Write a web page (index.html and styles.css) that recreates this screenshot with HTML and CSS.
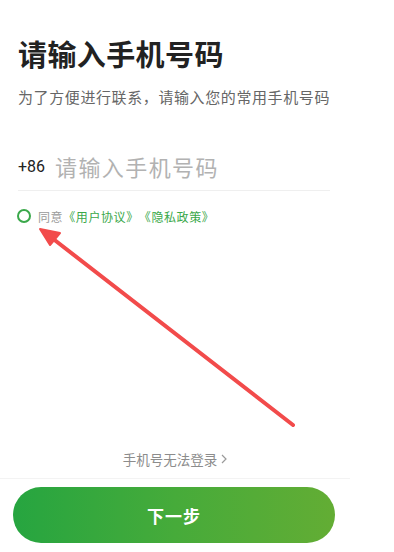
FILE: index.html
```html
<!DOCTYPE html>
<html lang="zh-CN">
<head>
  <meta charset="UTF-8" />
  <meta name="viewport" content="width=device-width, initial-scale=1.0"/>
  <title>手机号登录</title>
  <link rel="stylesheet" href="styles.css">
</head>
<body>
  <div class="page">
    <div class="top">
      <h1 class="title">请输入手机号码</h1>
      <p class="subtitle">为了方便进行联系，请输入您的常用手机号码</p>

      <div class="phone-row">
        <span class="prefix">+86</span>
        <input class="phone-input" type="tel" placeholder="请输入手机号码">
      </div>

      <div class="agree">
        <span class="radio"></span>
        <span class="agree-text">同意</span>
        <a class="agree-link" href="#">《用户协议》</a><a class="agree-link" href="#">《隐私政策》</a>
      </div>
    </div>

    <div class="bottom">
      <a class="help-link" href="#">手机号无法登录
        <svg class="chevron" width="6" height="10" viewBox="0 0 6 10"><polyline points="1,1 5,5 1,9" fill="none" stroke="#9a9a9a" stroke-width="1.2"/></svg>
      </a>
      <div class="divider"></div>
      <button class="next-btn">下一步</button>
    </div>

    <!-- annotation arrow -->
    <svg class="arrow" width="350" height="552" viewBox="0 0 350 552">
      <line x1="293" y1="425" x2="52" y2="238" stroke="#f24b4b" stroke-width="4" stroke-linecap="round"/>
      <polygon points="40,229 60,233 50,245" fill="#f24b4b" stroke="#f24b4b" stroke-width="2" stroke-linejoin="round"/>
    </svg>
  </div>
</body>
</html>
```

FILE: styles.css
```css
* { box-sizing: border-box; margin: 0; padding: 0; }
body {
  font-family: "Noto Sans CJK SC", "Noto Sans", sans-serif;
  background: #fff;
  color: #222;
}
.page {
  position: relative;
  width: 350px;
  height: 552px;
  display: flex;
  flex-direction: column;
}
.top { padding: 36px 18px 0 18px; }
.title {
  font-size: 29px; line-height: 35px; font-weight: 700;
  letter-spacing: 0.4px;
  color: #222;
}
.subtitle {
  margin-top: 16px;
  font-size: 15px; line-height: 20px; letter-spacing: 0.6px;
  color: #666;
  white-space: nowrap;
}
.phone-row {
  margin-top: 35px;
  width: 312px;
  height: 49px;
  display: flex; align-items: center;
  border-bottom: 1px solid #efefef;
}
.prefix {
  font-family: "Roboto", "Noto Sans", sans-serif;
  font-size: 16px; color: #222;
  margin-right: 10px;
}
.phone-input {
  flex: 1; border: none; outline: none; background: none;
  font-family: inherit; font-size: 22px; letter-spacing: 1.4px;
  color: #222;
}
.phone-input::placeholder { color: #b2b2b2; }
.agree {
  margin-top: 15px;
  height: 20px;
  display: flex; align-items: center;
  font-size: 12px; letter-spacing: 0.6px;
}
.radio {
  width: 14px; height: 14px;
  border: 2px solid #3aa84a; border-radius: 50%;
  margin-left: -1px; margin-right: 7px;
}
.agree-text { color: #9a9a9a; }
.agree-link { color: #3aa84a; text-decoration: none; }
.bottom {
  margin-top: auto;
  padding-bottom: 9px;
  display: flex; flex-direction: column; align-items: flex-start;
}
.help-link {
  align-self: center;
  display: flex; align-items: center; gap: 4px;
  font-size: 13.5px; line-height: 20px;
  color: #8c8c8c; text-decoration: none;
}
.divider {
  margin-top: 9px;
  width: 350px; height: 1px;
  background: #f3f3f3;
}
.next-btn {
  margin: 8px 0 0 13px;
  width: 322px; height: 56px;
  border: none; border-radius: 28px;
  background: linear-gradient(90deg, #26a540 0%, #46ab3a 50%, #63ad34 100%);
  color: #fff;
  font-family: inherit; font-size: 17px; font-weight: 700; letter-spacing: 1px;
  cursor: pointer;
}
.arrow {
  position: absolute; left: 0; top: 0;
  pointer-events: none;
}
```
